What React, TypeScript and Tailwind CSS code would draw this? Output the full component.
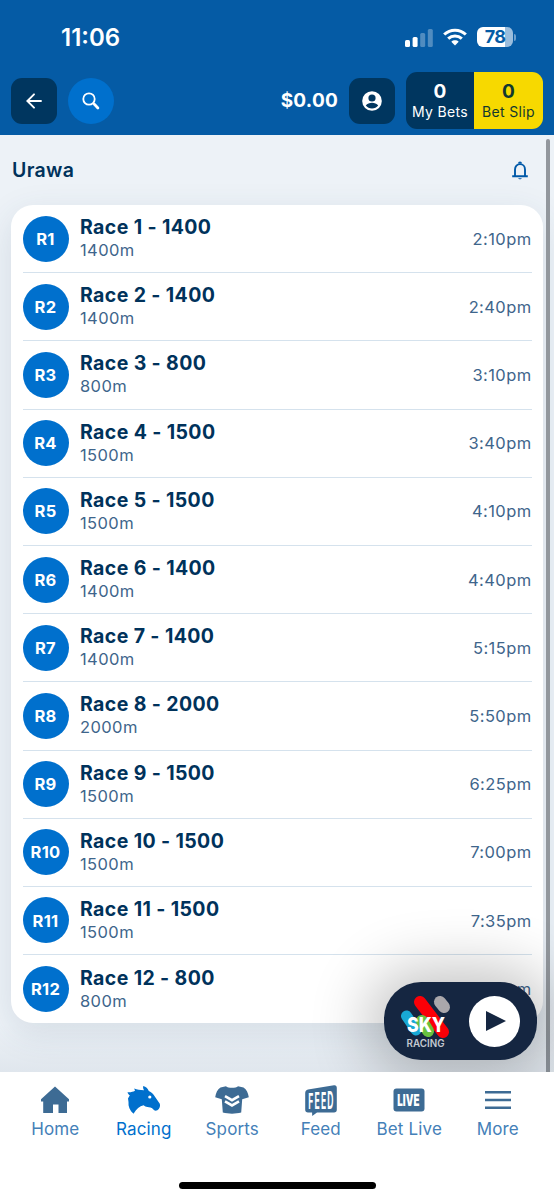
import { useState } from "react";

const races = [
  { number: 1, distance: 1400, time: "2:10pm" },
  { number: 2, distance: 1400, time: "2:40pm" },
  { number: 3, distance: 800, time: "3:10pm" },
  { number: 4, distance: 1500, time: "3:40pm" },
  { number: 5, distance: 1500, time: "4:10pm" },
  { number: 6, distance: 1400, time: "4:40pm" },
  { number: 7, distance: 1400, time: "5:15pm" },
  { number: 8, distance: 2000, time: "5:50pm" },
  { number: 9, distance: 1500, time: "6:25pm" },
  { number: 10, distance: 1500, time: "7:00pm" },
  { number: 11, distance: 1500, time: "7:35pm" },
  { number: 12, distance: 800, time: "8:10pm" },
];

const tabs = ["Home", "Racing", "Sports", "Feed", "Bet Live", "More"];

function StatusBar() {
  return (
    <div className="h-[72px] pl-[61px] pr-[38px] pt-[3px] flex items-center justify-between">
      <span className="text-[24px] font-semibold leading-none">11:06</span>
      <div className="flex items-center">
        <svg className="w-7 h-[18px]" viewBox="0 0 28 18" fill="white" aria-hidden="true">
          <rect x="0" y="11" width="5" height="7" rx="1.5" />
          <rect x="7.6" y="8" width="5" height="10" rx="1.5" />
          <rect x="15.2" y="4" width="5" height="14" rx="1.5" opacity="0.3" />
          <rect x="22.8" y="0" width="5" height="18" rx="1.5" opacity="0.3" />
        </svg>
        <svg className="w-6 h-[18px] ml-[10px] -mt-px" viewBox="0 0 24 18" fill="none" stroke="white" strokeWidth="3.1" aria-hidden="true">
          <path d="M1.2 6.5C7.2 .8 16.8 .8 22.8 6.5" />
          <path d="M5.2 10.6C9.1 7.1 14.9 7.1 18.8 10.6" />
          <path d="M8.3 13.7c2.1-1.9 5.3-1.9 7.4 0L12 17.4z" fill="white" stroke="none" />
        </svg>
        <div className="-mt-px ml-[10px] w-9 h-5 rounded-[6px] overflow-hidden bg-[linear-gradient(90deg,white_78%,#9abddd_78%)] flex items-center justify-center text-[18px] font-bold leading-none tracking-[-0.6px] text-[#055ba5]">
          78
        </div>
        <div className="ml-px w-[2px] h-[7px] rounded-r-full bg-[#6d9fcd]" />
      </div>
    </div>
  );
}

function Toolbar() {
  return (
    <div className="h-[57px] px-[11px] flex items-center">
      <button aria-label="Back" className="size-[46px] rounded-[11px] bg-[#00365f] flex items-center justify-center">
        <svg className="w-4 h-4" viewBox="0 0 16 16" fill="none" stroke="white" strokeWidth="1.9" strokeLinecap="round">
          <path d="M15 8H1.5M8 1.3 1.3 8 8 14.7" />
        </svg>
      </button>
      <button aria-label="Search" className="ml-[11px] size-[46px] rounded-full bg-[#0070cd] flex items-center justify-center">
        <svg className="w-[18px] h-[18px]" viewBox="0 0 18 18" fill="none" stroke="white">
          <circle cx="7" cy="7" r="5.7" strokeWidth="1.8" />
          <path d="m11 11 2 2" strokeWidth="2" />
          <path d="m12.6 12.6 3.3 3.3" strokeWidth="2.8" strokeLinecap="round" />
        </svg>
      </button>
      <span className="ml-auto text-[19px] font-bold leading-none tracking-[0.25px]">$0.00</span>
      <button aria-label="Account" className="ml-[11px] size-[46px] rounded-[11px] bg-[#00365f] flex items-center justify-center">
        <svg className="w-5 h-5" viewBox="0 0 20 20">
          <circle cx="10" cy="10" r="9.8" fill="white" />
          <circle cx="10" cy="7" r="3.6" fill="#00365f" />
          <path d="M3.8 14.5c2.8-3.6 9.6-3.6 12.4 0a7.8 7.8 0 0 1-12.4 0z" fill="#00365f" />
        </svg>
      </button>
      <div className="ml-[11px] flex w-[137px] h-[57px] rounded-[11px] overflow-hidden text-center">
        <button className="w-[68px] pt-0.5 bg-[#00365f]">
          <span className="block text-[19px] leading-5 font-bold">0</span>
          <span className="block text-[14px] leading-[19px] tracking-[0.35px] whitespace-nowrap">My Bets</span>
        </button>
        <button className="w-[69px] pt-0.5 bg-[#f7d900] text-[#12382f]">
          <span className="block text-[19px] leading-5 font-bold">0</span>
          <span className="block text-[14px] leading-[19px] tracking-[0.35px] whitespace-nowrap">Bet Slip</span>
        </button>
      </div>
    </div>
  );
}

function TabIcon({ name }: { name: string }) {
  switch (name) {
    case "Home":
      return (
        <svg className="w-7 h-7" viewBox="0 0 28 28" fill="currentColor">
          <path d="M14 .5 28 13.2v2.3h-2V27h-8.5v-8.5H12V27H2.2V15.5H0v-2.3z" />
        </svg>
      );
    case "Racing":
      return (
        <svg className="w-[34px] h-7" viewBox="0 0 34 28">
          <path
            fill="currentColor"
            d="M.5 6.2C3.5 6.6 5.5 6 8 4.800L7.200 2.500c3 1.400 5.500 1.600 9.800 1.700C16 2.500 16 1.200 16.200 0c2.800.8 4.600 2.400 5.600 5 2.600 1 4.600 2.900 6 5.500l5 7.300c.8 2.500-.2 5-2.400 6.400-1.900.9-3.200.4-4.400-1.200-1.600-1.500-3.500-1.700-5.600-2-1.500-.2-2.700-.8-3.800-1.800C12.500 20 9.500 23 6.500 27.700 2.800 24.500 1 20.500 1.500 16L1 12.500l1.800-3.200C1.600 8.600.9 7.700.5 6.200z"
          />
          <circle cx="22.800" cy="11" r="1.600" fill="white" />
        </svg>
      );
    case "Sports":
      return (
        <svg className="w-[34px] h-7" viewBox="0 0 34 28">
          <path
            fill="currentColor"
            d="M11 .2c2 2.200 10 2.200 12 0l5.500 1.300c3.200 2 4.600 5.700 5.300 9.700l-6.600 2-1 13.400c-5.600 1.500-12.800 1.500-18.400 0l-1-13.400-6.600-2c.7-4 2.100-7.700 5.300-9.700z"
          />
          <path fill="none" stroke="white" strokeWidth="2.6" d="m10 10.200 7 4 7-4M10 15.400l7 4 7-4" />
        </svg>
      );
    case "Feed":
      return (
        <svg className="w-8 h-[31px] overflow-visible" viewBox="0 0 32 31">
          <path
            fill="currentColor"
            d="m3 4.500 26-4.300c1.700-.3 2.800.8 2.800 2.500v22c0 1.700-1 2.800-2.800 2.800H12L7.200 31l-.1-3.500H3C1.300 27.500.2 26.400.2 24.700V8.200C.2 6 1.200 4.900 3 4.500z"
          />
          <g fill="white" fontSize="22" fontWeight="700">
            <text transform="translate(3.3 23.5) scale(.39 .96)">F</text>
            <text transform="translate(9.6 23.5) scale(.39 1.01)">E</text>
            <text transform="translate(15.9 23.5) scale(.39 1.06)">E</text>
            <text transform="translate(22.2 23.5) scale(.39 1.11)">D</text>
          </g>
        </svg>
      );
    case "Bet Live":
      return (
        <svg className="w-8 h-6 overflow-visible" viewBox="0 0 32 24">
          <rect x=".5" y=".5" width="31" height="23" rx="3" fill="currentColor" />
          <text fontSize="16" fontWeight="900" fill="white" transform="translate(4.3 17.8) scale(.61 1)">
            LIVE
          </text>
        </svg>
      );
    default:
      return (
        <svg className="w-[26px] h-[18px]" viewBox="0 0 26 18" fill="currentColor">
          <path d="M0 0h26v2.6H0zM0 7.7h26v2.6H0zM0 15.4h26V18H0z" />
        </svg>
      );
  }
}

function SkyPlayer() {
  return (
    <div className="absolute left-[384px] top-[982px] w-[153px] h-[78px] rounded-[37px] bg-[#152641] shadow-[0_3px_60px_16px_rgba(0,0,0,0.24)] flex items-center">
      <svg className="ml-4 w-[54px] h-[54px] mt-px overflow-visible" viewBox="0 0 54 54" role="img" aria-label="Sky Racing">
        <g strokeLinecap="round" fill="none">
          <path d="M6.5 21 16 35" stroke="#19a9d5" strokeWidth="11" />
          <path d="m20 7 23 30" stroke="#fb0007" strokeWidth="12" />
          <path d="m40 7 4 5" stroke="#aaa7ab" strokeWidth="12" />
          <path d="m22 26 6 10" stroke="#68c13f" strokeWidth="12" />
        </g>
        <text x="7" y="37" fontSize="20" fontWeight="800" fill="white" textLength="38" lengthAdjust="spacingAndGlyphs">
          SKY
        </text>
        <text x="6.5" y="51.5" fontSize="10" fontWeight="600" fill="#c4c8d0" textLength="38" lengthAdjust="spacingAndGlyphs">
          RACING
        </text>
      </svg>
      <button aria-label="Play" className="ml-[15px] size-[51px] rounded-full bg-white flex items-center justify-center">
        <svg className="w-5 h-5 ml-[3px]" viewBox="0 0 20 20">
          <path d="M0 0 20 10 0 20z" fill="#152641" />
        </svg>
      </button>
    </div>
  );
}

export default function App() {
  const [activeTab, setActiveTab] = useState("Racing");

  return (
    <div className="w-[554px] h-[1200px] overflow-hidden flex flex-col bg-white font-['Inter',sans-serif] relative">
      <header className="h-[135px] shrink-0 bg-[#055ba5] text-white">
        <StatusBar />
        <Toolbar />
      </header>

      <main className="relative h-[937px] shrink-0 overflow-hidden bg-[#edf2f7] px-[11px]">
        <div className="h-[70px] pl-px pr-[15px] flex items-center justify-between">
          <h1 className="pt-px text-[19.5px] font-semibold tracking-[0.3px] text-[#00325b]">Urawa</h1>
          <svg className="w-4 h-[19px] mt-px" viewBox="0 0 16 19" fill="none" stroke="#0059a8" strokeWidth="1.9" aria-hidden="true">
            <path d="M3 15V8.5C3 5.3 5.2 3.1 8 3.1s5 2.2 5 5.4V15M.2 15.3h15.6" />
            <path d="M6 2.4a2 2 0 0 1 4 0zM6.2 17.2h3.6c-.4 1.400-3.200 1.400-3.600 0z" fill="#0059a8" stroke="none" />
          </svg>
        </div>

        <ul className="w-[532px] h-[818px] rounded-[22px] bg-white px-[11.5px] shadow-[0_10px_34px_rgba(45,75,110,0.13)]">
          {races.map((race) => (
            <li key={race.number} className="h-[68.2px] flex items-center border-b border-[#d5e2ed] last:border-b-0">
              <div className="size-[46px] shrink-0 pt-px rounded-full bg-[#0070cd] text-white text-[16.5px] font-bold tracking-[0.3px] flex items-center justify-center">
                R{race.number}
              </div>
              <div className="ml-[11.5px] -mt-px">
                <div className="text-[19.5px] leading-6 font-bold tracking-[0.38px] text-[#00325b]">
                  Race {race.number} - {race.distance}
                </div>
                <div className="text-[16.5px] leading-[22px] tracking-[0.4px] text-[#3e658b]">{race.distance}m</div>
              </div>
              <span className="ml-auto pt-px text-[16.5px] tracking-[0.4px] text-[#3e658b]">{race.time}</span>
            </li>
          ))}
        </ul>
        {/* Scrollbar */}
        <div className="absolute right-1 top-1 w-1 h-[940px] rounded-full bg-[#92979d]" />
        <div className="absolute inset-x-0 bottom-0 h-12 bg-gradient-to-t from-[#475f7b]/8 to-transparent" />
      </main>

      <nav className="relative z-10 h-[128px] shrink-0 bg-white pl-[11px] pr-[12px]">
        <div className="grid grid-cols-6">
          {tabs.map((tab) => (
            <button
              key={tab}
              onClick={() => setActiveTab(tab)}
              className={`pt-3 flex flex-col items-center ${activeTab === tab ? "text-[#0070cd]" : "text-[#3d6b94]"}`}
            >
              <span className="h-8 flex items-center">
                <TabIcon name={tab} />
              </span>
              <span
                className={`mt-0.5 text-[17px] leading-[22px] tracking-[0.15px] whitespace-nowrap ${
                  activeTab === tab ? "text-[#0070cd]" : "text-[#4480b8]"
                }`}
              >
                {tab}
              </span>
            </button>
          ))}
        </div>
        {/* Home indicator */}
        <div className="absolute left-[179px] top-[110px] w-[197px] h-[7px] rounded-full bg-black" />
      </nav>

      <SkyPlayer />
    </div>
  );
}
